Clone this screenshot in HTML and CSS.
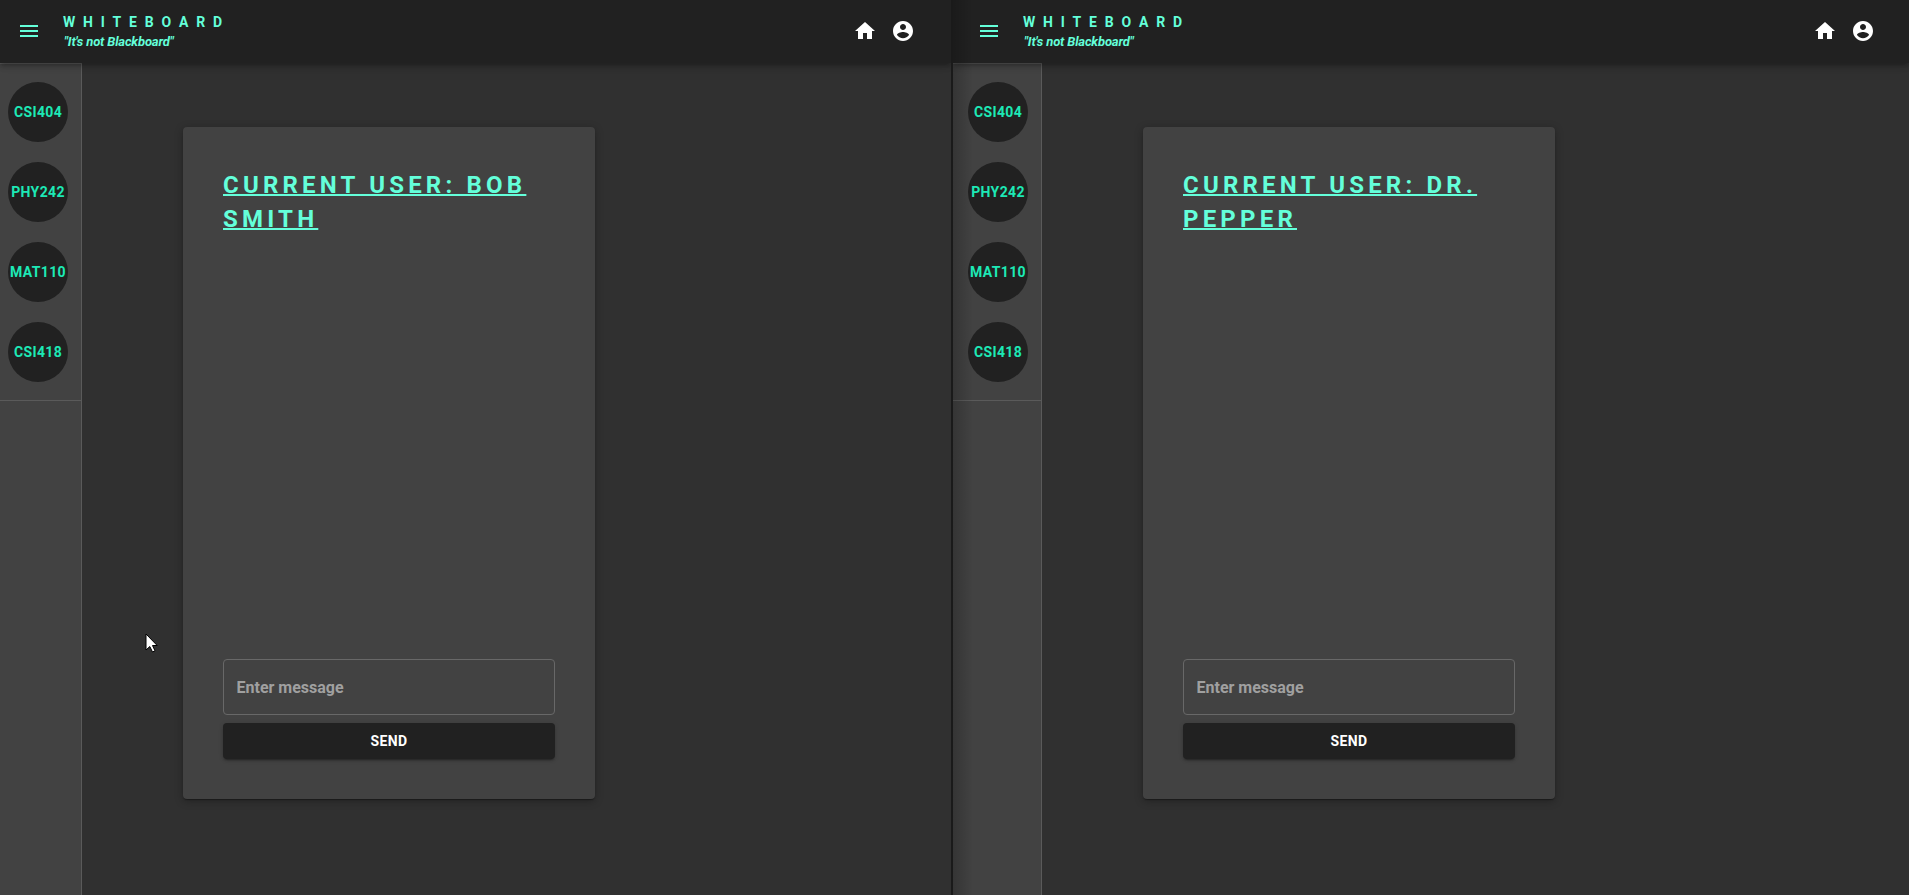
FILE: index.html
```
<!DOCTYPE html>
<html lang="en">
<head>
<meta charset="utf-8">
<title>Whiteboard</title>
<link rel="stylesheet" href="styles.css">
</head>
<body>
<svg class="symbols" width="0" height="0">
  <symbol id="menu" viewBox="0 0 24 24"><path d="M3 18h18v-2H3v2zm0-5h18v-2H3v2zm0-7v2h18V6H3z"/></symbol>
  <symbol id="home" viewBox="0 0 24 24"><path d="M10 20v-6h4v6h5v-8h3L12 3 2 12h3v8z"/></symbol>
  <symbol id="account" viewBox="0 0 24 24"><path d="M12 2C6.48 2 2 6.48 2 12s4.480 10 10 10 10-4.480 10-10S17.520 2 12 2zm0 3c1.660 0 3 1.340 3 3s-1.340 3-3 3-3-1.340-3-3 1.340-3 3-3zm0 14.200c-2.500 0-4.710-1.280-6-3.220.030-1.990 4-3.080 6-3.080 1.990 0 5.970 1.090 6 3.080-1.290 1.940-3.500 3.220-6 3.220z"/></symbol>
</svg>
<main class="desktop">
  <section class="window window-left">
    <header class="appbar">
      <svg class="icon menu"><use href="#menu"/></svg>
      <div class="brand"><div class="name">WHITEBOARD</div><div class="tagline">"It's not Blackboard"</div></div>
      <nav class="actions"><svg class="icon"><use href="#home"/></svg><svg class="icon"><use href="#account"/></svg></nav>
    </header>
    <div class="body">
      <aside class="sidebar">
        <div class="courses"><div class="course">CSI404</div><div class="course">PHY242</div><div class="course">MAT110</div><div class="course">CSI418</div></div>
      </aside>
      <div class="card">
        <h1 class="title">CURRENT USER: BOB SMITH</h1>
        <form class="composer"><input class="message" type="text" placeholder="Enter message"><button class="send" type="button">SEND</button></form>
      </div>
    </div>
    <svg class="cursor" viewBox="0 0 14 21"><path d="M1 1v16l3.800-3.500 2.700 5.500 2.500-1.200-2.500-5.300h4.700z"/></svg>
  </section>
  <section class="window window-right">
    <header class="appbar">
      <svg class="icon menu"><use href="#menu"/></svg>
      <div class="brand"><div class="name">WHITEBOARD</div><div class="tagline">"It's not Blackboard"</div></div>
      <nav class="actions"><svg class="icon"><use href="#home"/></svg><svg class="icon"><use href="#account"/></svg></nav>
    </header>
    <div class="body">
      <aside class="sidebar">
        <div class="courses"><div class="course">CSI404</div><div class="course">PHY242</div><div class="course">MAT110</div><div class="course">CSI418</div></div>
      </aside>
      <div class="card">
        <h1 class="title">CURRENT USER: DR. PEPPER</h1>
        <form class="composer"><input class="message" type="text" placeholder="Enter message"><button class="send" type="button">SEND</button></form>
      </div>
    </div>
  </section>
</main>
</body>
</html>
```
FILE: styles.css
```
* { box-sizing: border-box; }
body { margin: 0; background: #303030; font-family: Roboto, sans-serif; font-weight: 700; overflow: hidden; }
.symbols { display: block; }
.desktop { display: flex; width: 1909px; height: 895px; }
.window { position: relative; display: flex; flex-direction: column; overflow: hidden; background: #303030; }
.window-left { width: 951px; }
.window-right { width: 958px; border-left: 2px solid #1a1a1a; }
.window-right::after { content: ""; position: absolute; z-index: 3; inset: 0 auto 0 0; width: 20px; background: linear-gradient(90deg, rgba(0,0,0,.2), rgba(0,0,0,0)); }
.appbar { position: relative; z-index: 2; display: flex; flex: none; height: 63px; padding: 0 36px 0 17px; align-items: flex-start; background: #212121; box-shadow: 0 2px 4px -1px rgba(0,0,0,.2), 0 4px 5px rgba(0,0,0,.14), 0 1px 10px rgba(0,0,0,.12); }
.window-right .appbar { padding: 0 34px 0 24px; }
.icon { width: 24px; height: 24px; margin-top: 19px; fill: #fff; }
.menu { fill: #64ffda; }
.brand { margin: 14px 0 0 22px; color: #64ffda; }
.name { font-size: 14px; line-height: 16px; letter-spacing: 7.85px; }
.tagline { margin-top: 3px; padding-left: 1px; font-size: 13px; line-height: 17px; font-style: italic; letter-spacing: -.15px; }
.actions { display: flex; gap: 14px; margin-left: auto; }
.body { display: flex; flex: 1; align-items: flex-start; }
.sidebar { align-self: stretch; width: 82px; background: #424242; border: solid #5a5a5a; border-width: 1px 1px 0 0; }
.window-right .sidebar { width: 89px; }
.courses { display: flex; flex-direction: column; gap: 20px; height: 337px; padding: 18px 0 0 8px; border-bottom: 1px solid #5a5a5a; }
.window-right .courses { padding-left: 15px; }
.course { display: flex; align-items: center; justify-content: center; width: 60px; height: 60px; border-radius: 50%; background: #212121; color: #1de9b6; font-size: 14px; line-height: 16px; letter-spacing: .35px; }
.card { display: flex; flex-direction: column; width: 412px; height: 672px; margin: 64px 0 0 101px; padding: 40px; background: #424242; border-radius: 4px; box-shadow: 0 2px 1px -1px rgba(0,0,0,.2), 0 1px 1px rgba(0,0,0,.14), 0 2px 8px rgba(0,0,0,.3); }
.title { margin: 1px 0 0; color: #64ffda; font-size: 24px; line-height: 34px; font-weight: 700; letter-spacing: 4.2px; text-decoration: underline; text-decoration-thickness: 2px; }
.composer { display: flex; flex-direction: column; gap: 8px; margin: auto 0 0; }
.message { height: 56px; padding: 0 12.500px; border: 1px solid #686868; border-radius: 4px; background: transparent; color: #fff; font: 700 16px Roboto, sans-serif; }
.message::placeholder { color: #a0a0a0; opacity: 1; }
.send { height: 36px; border: 0; border-radius: 4px; background: #212121; color: #fff; font: 700 14px Roboto, sans-serif; letter-spacing: .4px; box-shadow: 0 3px 1px -2px rgba(0,0,0,.2), 0 2px 2px rgba(0,0,0,.14), 0 1px 5px rgba(0,0,0,.12); }
.cursor { position: absolute; left: 145px; top: 633px; width: 14px; height: 21px; fill: #fff; stroke: #000; stroke-width: 1; }
```
